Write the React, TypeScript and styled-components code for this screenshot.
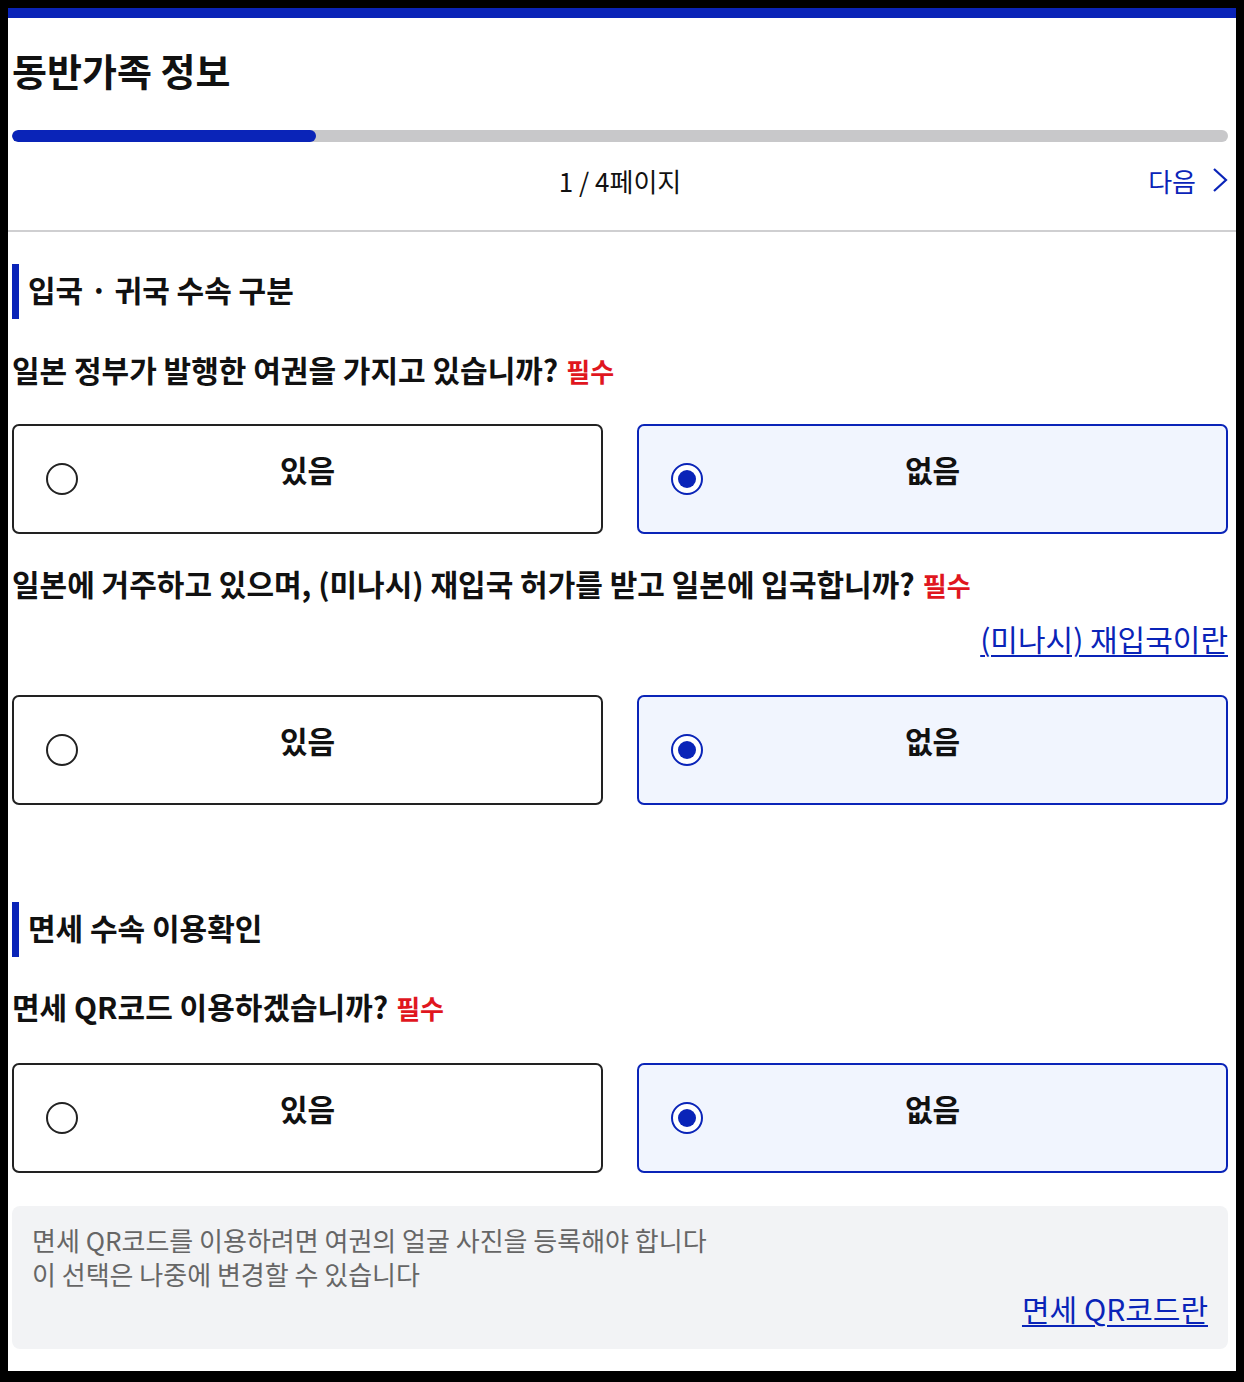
import React from 'react';
import styled, { createGlobalStyle } from 'styled-components';

const GlobalStyle = createGlobalStyle`
  html, body {
    margin: 0;
    padding: 0;
    background: #000;
  }
  body {
    padding: 8px;
    font-family: 'Noto Sans CJK KR', 'Noto Sans', sans-serif;
    color: #111;
  }
`;

const BLUE = '#0a24b8';

const Page = styled.div`
  background: #fff;
  border-top: 10px solid ${BLUE};
  padding-bottom: 22px;
`;

const Header = styled.header`
  padding: 30px 8px 0 4px;
`;

const Title = styled.h1`
  margin: 0;
  font-size: 38px;
  line-height: 44px;
  font-weight: 700;
`;

const Progress = styled.div`
  margin-top: 38px;
  height: 12px;
  border-radius: 6px;
  background: #c8c8ca;
  overflow: hidden;
`;

const ProgressFill = styled.div`
  height: 100%;
  border-radius: 6px;
  background: ${BLUE};
`;

const Pager = styled.div`
  display: grid;
  grid-template-columns: 1fr auto 1fr;
  align-items: center;
  height: 46px;
  margin-top: 15px;
`;

const PageCount = styled.span`
  grid-column: 2;
  font-size: 26px;
  color: #111;
`;

const NextLink = styled.a`
  justify-self: end;
  display: flex;
  align-items: center;
  gap: 16px;
  font-size: 26px;
  color: ${BLUE};
  text-decoration: none;
`;

const Divider = styled.hr`
  margin: 27px 0 0;
  border: 0;
  border-top: 2px solid #cfcfd1;
`;

const Body = styled.main`
  padding: 0 8px 0 4px;
`;

const SectionTitle = styled.h2<{ $top: number }>`
  margin: ${(p) => p.$top}px 0 0;
  height: 55px;
  box-sizing: border-box;
  display: flex;
  align-items: center;
  border-left: 7px solid ${BLUE};
  padding: 0 0 6px 9px;
  font-size: 30px;
  font-weight: 700;
`;

const Question = styled.p<{ $top: number }>`
  margin: ${(p) => p.$top}px 0 0;
  font-size: 30px;
  line-height: 40px;
  font-weight: 700;
`;

const Required = styled.span`
  margin-left: 8px;
  font-size: 26px;
  color: #e0161e;
`;

const HelpRow = styled.div`
  display: flex;
  justify-content: flex-end;
  margin-top: 13px;
`;

const HelpLink = styled.a`
  font-size: 30px;
  line-height: 40px;
  color: ${BLUE};
  text-decoration: underline;
  text-underline-offset: 4px;
  text-decoration-thickness: 2px;
`;

const Options = styled.div<{ $top: number }>`
  display: grid;
  grid-template-columns: 1fr 1fr;
  gap: 34px;
  margin-top: ${(p) => p.$top}px;
`;

const Option = styled.label<{ $checked: boolean }>`
  display: grid;
  grid-template-columns: 32px 1fr 32px;
  align-items: center;
  height: 110px;
  box-sizing: border-box;
  padding: 0 32px;
  border: 2px solid ${(p) => (p.$checked ? BLUE : '#222')};
  border-radius: 7px;
  background: ${(p) => (p.$checked ? '#f1f5fe' : '#fff')};
  cursor: pointer;
`;

const Radio = styled.span<{ $checked: boolean }>`
  width: 32px;
  height: 32px;
  box-sizing: border-box;
  border-radius: 50%;
  border: 2px solid ${(p) => (p.$checked ? BLUE : '#222')};
  display: flex;
  align-items: center;
  justify-content: center;
  background: #fff;

  &::after {
    content: '';
    width: 18px;
    height: 18px;
    border-radius: 50%;
    background: ${(p) => (p.$checked ? BLUE : 'transparent')};
  }
`;

const OptionLabel = styled.span`
  text-align: center;
  font-size: 30px;
  font-weight: 700;
  padding-bottom: 20px;
`;

const Notice = styled.div`
  margin-top: 33px;
  background: #f2f3f5;
  border-radius: 8px;
  padding: 17px 20px 24px;
  display: flex;
  flex-direction: column;
`;

const NoticeText = styled.p`
  margin: 0;
  font-size: 26px;
  line-height: 34px;
  color: #666;
`;

const NoticeLink = styled(HelpLink)`
  align-self: flex-end;
  line-height: 34px;
`;

const Chevron = () => (
  <svg width="16" height="26" viewBox="0 0 16 26" fill="none">
    <polyline points="2,2 14,13 2,24" stroke={BLUE} strokeWidth="2.2" strokeLinejoin="miter" />
  </svg>
);

const YesNo: React.FC<{ top?: number }> = ({ top = 33 }) => (
  <Options $top={top}>
    <Option $checked={false}>
      <Radio $checked={false} />
      <OptionLabel>있음</OptionLabel>
    </Option>
    <Option $checked>
      <Radio $checked />
      <OptionLabel>없음</OptionLabel>
    </Option>
  </Options>
);

export default function App() {
  const current = 1;
  const total = 4;
  return (
    <Page>
      <GlobalStyle />
      <Header>
        <Title>동반가족 정보</Title>
        <Progress>
          <ProgressFill style={{ width: `${(current / total) * 100}%` }} />
        </Progress>
        <Pager>
          <PageCount>
            {current} / {total}페이지
          </PageCount>
          <NextLink>
            다음 <Chevron />
          </NextLink>
        </Pager>
      </Header>
      <Divider />
      <Body>
        <SectionTitle $top={32}>입국 · 귀국 수속 구분</SectionTitle>
        <Question $top={30}>
          일본 정부가 발행한 여권을 가지고 있습니까?<Required>필수</Required>
        </Question>
        <YesNo />
        <Question $top={29}>
          일본에 거주하고 있으며, (미나시) 재입국 허가를 받고 일본에 입국합니까?<Required>필수</Required>
        </Question>
        <HelpRow>
          <HelpLink>(미나시) 재입국이란</HelpLink>
        </HelpRow>
        <YesNo top={37} />

        <SectionTitle $top={97}>면세 수속 이용확인</SectionTitle>
        <Question $top={29}>
          면세 QR코드 이용하겠습니까?<Required>필수</Required>
        </Question>
        <YesNo top={35} />
        <Notice>
          <NoticeText>면세 QR코드를 이용하려면 여권의 얼굴 사진을 등록해야 합니다</NoticeText>
          <NoticeText>이 선택은 나중에 변경할 수 있습니다</NoticeText>
          <NoticeLink>면세 QR코드란</NoticeLink>
        </Notice>
      </Body>
    </Page>
  );
}
